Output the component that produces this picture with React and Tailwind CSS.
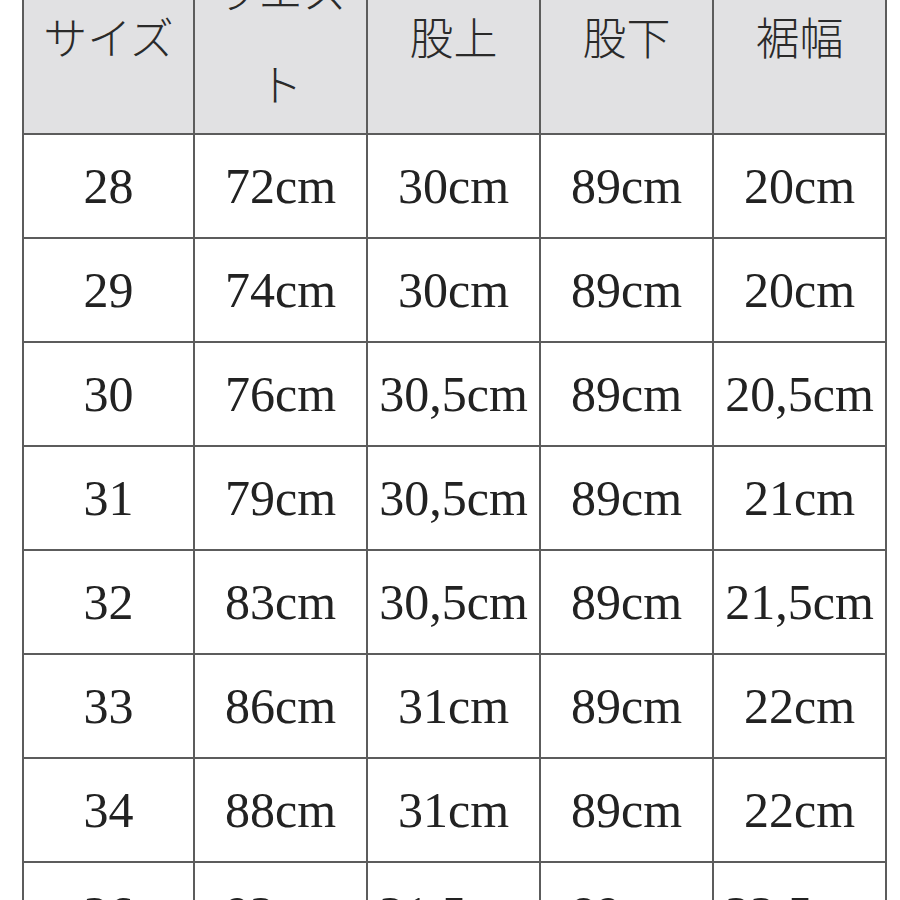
import React from "react";

const rows = [
  ["28", "72cm", "30cm", "89cm", "20cm"],
  ["29", "74cm", "30cm", "89cm", "20cm"],
  ["30", "76cm", "30,5cm", "89cm", "20,5cm"],
  ["31", "79cm", "30,5cm", "89cm", "21cm"],
  ["32", "83cm", "30,5cm", "89cm", "21,5cm"],
  ["33", "86cm", "31cm", "89cm", "22cm"],
  ["34", "88cm", "31cm", "89cm", "22cm"],
  ["36", "92cm", "31,5cm", "89cm", "22,5cm"],
];

const widths = ["w-[171px]", "w-[173px]", "w-[173px]", "w-[173px]", "w-[173px]"];

function HeaderCell({ w, children }) {
  return (
    <div
      className={`${w} h-[196px] pt-[9px] shrink-0 border-r-2 border-b-2 border-[#5c5c5c] bg-[#e1e1e3] flex flex-col items-center justify-center text-[44px] leading-[93px] text-[#2a2a2a]`}
    >
      {children}
    </div>
  );
}

export default function App() {
  return (
    <div className="w-[900px] h-[900px] overflow-hidden bg-white">
      <div
        className="ml-[22px] mt-[-61px] w-[866px] border-l-2 border-[#5c5c5c] flex flex-col"
        style={{ fontFamily: '"Liberation Serif", "Noto Sans CJK JP", serif' }}
      >
        <div className="flex font-light">
          <HeaderCell w={widths[0]}>
            <span>サイズ</span>
          </HeaderCell>
          <HeaderCell w={widths[1]}>
            <span>ウエス</span>
            <span>ト</span>
          </HeaderCell>
          <HeaderCell w={widths[2]}>
            <span>股上</span>
          </HeaderCell>
          <HeaderCell w={widths[3]}>
            <span>股下</span>
          </HeaderCell>
          <HeaderCell w={widths[4]}>
            <span>裾幅</span>
          </HeaderCell>
        </div>
        {rows.map((r, i) => (
          <div key={i} className="flex">
            {r.map((c, j) => (
              <div
                key={j}
                className={`${widths[j]} h-[104px] shrink-0 border-r-2 border-b-2 border-[#5c5c5c] flex items-center justify-center text-[50px] text-[#222] whitespace-nowrap`}
              >
                {c}
              </div>
            ))}
          </div>
        ))}
      </div>
    </div>
  );
}
